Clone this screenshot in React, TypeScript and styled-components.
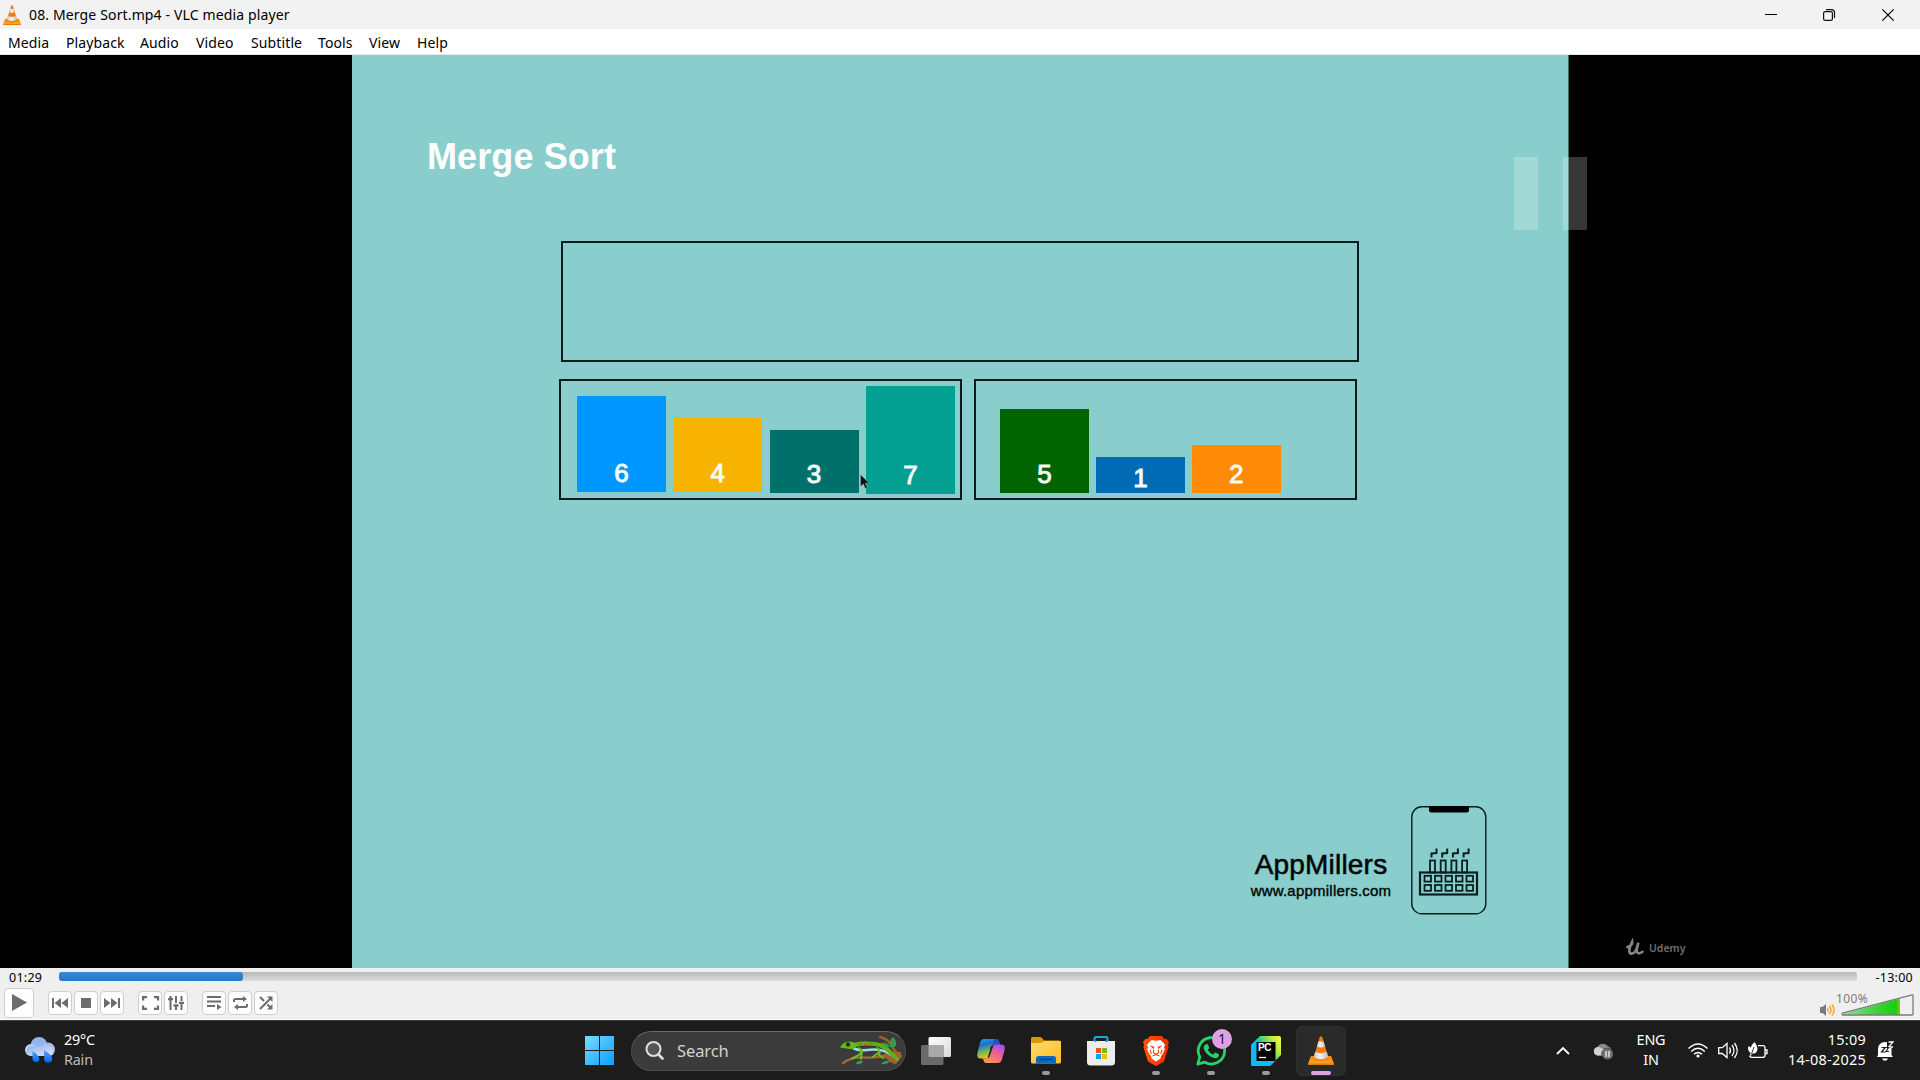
import React from "react";
import styled, { createGlobalStyle } from "styled-components";

const UI = `"Noto Sans", "Open Sans", sans-serif`;
const SLIDE = `"Liberation Sans", Arial, sans-serif`;

const GlobalStyle = createGlobalStyle`
  * { box-sizing: border-box; }
  html, body { margin: 0; padding: 0; background: #000; }
  svg { display: block; flex: none; overflow: visible; }
  button { padding: 0; margin: 0; font: inherit; }
`;

const Desktop = styled.div`
  width: 1920px;
  height: 1080px;
  display: flex;
  flex-direction: column;
  overflow: hidden;
  font-family: ${UI};
  color: #000;
`;

/* ---------- window chrome ---------- */
const TitleBar = styled.header`
  height: 29px;
  flex: none;
  display: flex;
  align-items: center;
  background: #f2f2f2;
  padding: 0 3px;
`;
const Title = styled.span`
  font-size: 14px;
  line-height: 29px;
  margin-left: 8px;
  letter-spacing: 0.14px;
  flex: 1;
`;
const WindowButton = styled.button`
  width: 58.5px;
  height: 28px;
  border: 0;
  background: none;
  display: flex;
  align-items: center;
  justify-content: center;
`;
const MenuBar = styled.nav`
  height: 26px;
  flex: none;
  display: flex;
  background: #fff;
  border-bottom: 1px solid #e6e6e6;
  padding-left: 8px;
`;
const MenuItem = styled.span<{ $w: number }>`
  width: ${(p) => p.$w}px;
  flex: none;
  white-space: nowrap;
  font-size: 14px;
  line-height: 27px;
  letter-spacing: 0.12px;
`;

/* ---------- video ---------- */
const Video = styled.main`
  position: relative;
  height: 913px;
  flex: none;
  background: #000;
  display: flex;
  padding-left: 352px;
`;
const Slide = styled.section`
  width: 1217px;
  height: 913px;
  background: #89cecc;
  border-right: 1px solid #3d6e6c;
  display: flex;
  flex-direction: column;
  padding: 81px 0 0 75px;
  font-family: ${SLIDE};
`;
const SlideTitle = styled.h1`
  margin: 0;
  height: 105px;
  font-size: 36px;
  line-height: 41px;
  font-weight: 700;
  letter-spacing: 0.1px;
  color: #fff;
`;
const ResultBox = styled.div`
  margin-left: 134px;
  width: 798px;
  height: 121px;
  border: 2px solid #0b1a1a;
`;
const Halves = styled.div`
  display: flex;
  gap: 12px;
  margin: 17px 0 0 132px;
`;
const Half = styled.div<{ $w: number; $pad: number; $gap: number }>`
  position: relative;
  width: ${(p) => p.$w}px;
  height: 121px;
  border: 2px solid #0b1a1a;
  padding-left: ${(p) => p.$pad}px;
  display: flex;
  align-items: flex-end;
  gap: ${(p) => p.$gap}px;
`;
const Bar = styled.div<{ $h: number; $c: string; $b: number; $t: number }>`
  width: 89px;
  height: ${(p) => p.$h}px;
  margin-bottom: ${(p) => p.$b}px;
  background: ${(p) => p.$c};
  color: #f4fbf6;
  display: flex;
  align-items: flex-end;
  justify-content: center;
  font-size: 26px;
  line-height: 26px;
  padding-bottom: ${(p) => p.$t}px;
  -webkit-text-stroke: 1px #f4fbf6;
`;
const Pointer = styled.svg`
  position: absolute;
  left: 299px;
  top: 93px;
`;
const Brand = styled.div`
  margin: auto 81px 53px auto;
  display: flex;
  align-items: flex-start;
`;
const BrandText = styled.div`
  width: 142px;
  padding-top: 42px;
  margin-right: 19px;
  text-align: center;
  white-space: nowrap;
`;
const BrandName = styled.div`
  font-size: 28px;
  line-height: 34px;
  letter-spacing: 0.2px;
  -webkit-text-stroke: 0.6px #061313;
`;
const BrandUrl = styled.div`
  font-size: 15px;
  line-height: 18px;
  letter-spacing: 0.22px;
  -webkit-text-stroke: 0.45px #061313;
`;
const PauseOverlay = styled.div`
  position: absolute;
  left: 1514px;
  top: 102px;
  display: flex;
  gap: 25px;
`;
const PauseBar = styled.i`
  width: 24px;
  height: 73px;
  background: rgba(255, 255, 255, 0.21);
`;
const Watermark = styled.div`
  position: absolute;
  left: 1626px;
  top: 885px;
  display: flex;
  align-items: center;
  gap: 5px;
  color: #707070;
  font: 600 10.5px/16px ${UI};
`;

/* ---------- player controls ---------- */
const Controls = styled.footer`
  height: 52px;
  flex: none;
  background: #efefef;
  display: flex;
  flex-direction: column;
`;
const SeekRow = styled.div`
  height: 18px;
  display: flex;
  align-items: center;
  padding: 0 7px 0 9px;
`;
const Time = styled.span<{ $w: number; $right?: boolean }>`
  width: ${(p) => p.$w}px;
  text-align: ${(p) => (p.$right ? "right" : "left")};
  font-size: 12.5px;
  line-height: 18px;
  padding-top: 1px;
  letter-spacing: 0.25px;
`;
const Track = styled.div`
  flex: 1;
  height: 9px;
  margin-top: -1px;
  border-radius: 3px;
  background: linear-gradient(#b9b9b9, #dcdcdc);
`;
const Played = styled.div`
  width: 184px;
  height: 9px;
  border-radius: 3px;
  background: linear-gradient(#388ad6, #2477c8);
`;
const ButtonRow = styled.div`
  flex: 1;
  display: flex;
  align-items: center;
  padding: 0 6px 0 4px;
  border-bottom: 1px solid #fafafa;
`;
const PlayerButton = styled.button<{ $size?: number; $gap?: number }>`
  width: ${(p) => p.$size ?? 24}px;
  height: ${(p) => p.$size ?? 24}px;
  margin-right: ${(p) => p.$gap ?? 2}px;
  background: #fdfdfd;
  border: 1px solid #cfcfcf;
  border-radius: 4px;
  display: flex;
  align-items: center;
  justify-content: center;
`;
const Volume = styled.div`
  position: relative;
  margin-left: auto;
  display: flex;
  align-items: flex-end;
  gap: 6px;
  height: 26px;
`;
const VolumeLabel = styled.span`
  position: absolute;
  left: 16px;
  top: 0;
  font-size: 12px;
  line-height: 18px;
  letter-spacing: 0.4px;
  color: #7c7c7c;
`;

/* ---------- taskbar ---------- */
const Taskbar = styled.div`
  height: 60px;
  flex: none;
  display: flex;
  align-items: center;
  background: #1c1c1c;
  border-top: 1px solid #404040;
  color: #fff;
`;
const Weather = styled.div`
  width: 576px;
  padding-left: 25px;
  display: flex;
  align-items: center;
  gap: 9px;
`;
const Lines = styled.div<{ $align?: string; $w?: number; $ls?: number }>`
  width: ${(p) => (p.$w ? p.$w + "px" : "auto")};
  padding-bottom: 2px;
  text-align: ${(p) => p.$align ?? "left"};
  font-size: 14.4px;
  line-height: 20px;
  letter-spacing: ${(p) => p.$ls ?? -0.2}px;
  white-space: nowrap;
`;
const Muted = styled.div`
  color: #bdbdbd;
`;
const StartButton = styled.div`
  width: 55px;
  padding-left: 9px;
`;
const SearchBox = styled.div`
  width: 275px;
  height: 40px;
  border-radius: 20px;
  background: #3b3b3b;
  border: 1px solid #4d4d4d;
  border-top-color: #686868;
  display: flex;
  align-items: center;
  padding: 0 3px 0 13px;
  color: #d2d2d2;
  font-size: 16.5px;
  letter-spacing: -0.1px;
`;
const SearchText = styled.span`
  flex: 1;
  padding-left: 13px;
  line-height: 38px;
`;
const Apps = styled.div`
  display: flex;
  margin-left: 5px;
  gap: 5px;
`;
const AppTile = styled.div<{ $active?: boolean }>`
  position: relative;
  width: 50px;
  height: 50px;
  border-radius: 6px;
  display: flex;
  align-items: center;
  justify-content: center;
  background: ${(p) => (p.$active ? "#2a2a2a" : "transparent")};
  border: 1px solid ${(p) => (p.$active ? "#313131" : "transparent")};
`;
const Indicator = styled.i<{ $active?: boolean }>`
  position: absolute;
  bottom: 0;
  left: 50%;
  transform: translateX(-50%);
  width: ${(p) => (p.$active ? 20 : 8)}px;
  height: 4px;
  border-radius: 2px;
  background: ${(p) => (p.$active ? "#dfa0e6" : "#9a9a9a")};
`;
const Badge = styled.span`
  position: absolute;
  left: 25px;
  top: 2px;
  width: 20px;
  height: 20px;
  border-radius: 50%;
  background: #dfa0e6;
  color: #1a1a1a;
  font-size: 14px;
  line-height: 20px;
  text-align: center;
`;
const Tray = styled.div`
  margin-left: auto;
  display: flex;
  align-items: center;
  padding-right: 26px;
`;
const TrayCell = styled.div<{ $ml: number }>`
  margin-left: ${(p) => p.$ml}px;
`;

/* ---------- drawings ---------- */
const Cone = ({ w, h }: { w: number; h: number }) => (
  <svg width={w} height={h} viewBox="0 0 26 29" preserveAspectRatio="none">
    <defs>
      <linearGradient id="coneBase" x1="0" y1="0" x2="0" y2="1">
        <stop offset="0" stopColor="#ff8a10" />
        <stop offset="1" stopColor="#ffa71e" />
      </linearGradient>
      <linearGradient id="coneWhite" x1="0" y1="0" x2="1" y2="0">
        <stop offset="0" stopColor="#c9c9c9" />
        <stop offset=".45" stopColor="#f2f2f2" />
        <stop offset="1" stopColor="#bdbdbd" />
      </linearGradient>
    </defs>
    <path d="M3.6 20h18.8q.8 0 1 .8L26 28q.2 1-.9 1H.9Q-.2 29 0 28l2.6-7.2q.3-.8 1-.8z" fill="url(#coneBase)" />
    <path d="M0 27.4h26v1q0 .6-.8.6H.8q-.8 0-.8-.6z" fill="#e07c08" />
    <path d="M11.9.8q1.1-1 2.2 0L20.6 22q-1 2.5-7.6 2.5T5.4 22z" fill="#f57c0a" />
    <path d="M10.5 5.2q2.5 1.3 5 0l1.6 5.2q-4 2-8.2 0z" fill="url(#coneWhite)" />
    <path d="M7.300 15.8q5.600 2.700 11.400 0l1.500 5q-1.400 2.400-7.200 2.400t-7.200-2.400z" fill="url(#coneWhite)" />
  </svg>
);

const Factory = () => (
  <svg width="76" height="109" viewBox="0 0 76 109" fill="none" stroke="#07201f">
    <rect x=".8" y=".8" width="74" height="107" rx="10" strokeWidth="1.4" />
    <path d="M18 0h40v4q0 2.500-2.500 2.500h-35Q18 6.500 18 4z" fill="#000" stroke="none" />
    <rect x="9" y="66.500" width="57" height="22" strokeWidth="2.200" />
    {[0, 1, 2, 3, 4].map((i) => (
      <g key={i} strokeWidth="1.800">
        <rect x={13.5 + i * 10.5} y="69.800" width="6.500" height="5.800" />
        <rect x={13.5 + i * 10.5} y="79" width="6.500" height="5.800" />
      </g>
    ))}
    {[0, 1, 2, 3].map((i) => (
      <g key={i}>
        <rect x={19 + i * 10.7} y="54.500" width="5" height="12" strokeWidth="1.800" />
        <polyline
          points={`${20.5 + i * 10.7},51.5 ${20.5 + i * 10.7},47.500 ${25.5 + i * 10.7},47 ${25.5 + i * 10.7},42.500`}
          strokeWidth="2"
        />
      </g>
    ))}
  </svg>
);

const WeatherIcon = () => (
  <svg width="30" height="27" viewBox="0 0 30 27">
    <defs>
      <linearGradient id="cloud" x1="0" y1="0" x2="1" y2="1">
        <stop offset="0" stopColor="#8fb4ee" />
        <stop offset=".5" stopColor="#b9cdf2" />
        <stop offset="1" stopColor="#dce6fa" />
      </linearGradient>
      <linearGradient id="drop" x1="0" y1="0" x2="0" y2="1">
        <stop offset="0" stopColor="#5aa4ff" />
        <stop offset="1" stopColor="#0064f5" />
      </linearGradient>
    </defs>
    <circle cx="14" cy="8.500" r="8.500" fill="#93b5ec" />
    <circle cx="6" cy="13" r="6" fill="#c3d5f6" />
    <circle cx="23" cy="12.500" r="7" fill="#a5c0ee" />
    <rect x="1.500" y="9" width="27" height="10" rx="5" fill="url(#cloud)" />
    <path d="M7.500 14q6.500 4 7 8.500a3.700 3.700 0 0 1-7 0zM19 13q7.800 4.500 8.300 9a4.300 4.300 0 0 1-8 1.500z" fill="url(#drop)" />
  </svg>
);

const Gecko = () => (
  <svg width="62" height="30" viewBox="0 0 62 30" fill="none" strokeLinecap="round">
    <path d="M3 27q8-6 21-5.500T45 20" stroke="#a86a35" strokeWidth="2.200" />
    <path d="M40 1q8 2 11 8t10 11" stroke="#9a5d2d" strokeWidth="2.600" />
    <path d="M36 20q8-1 12-4 6-1 13 0v6l-5 6q-6-1-8-4t-12-2z" fill="#a0622c" />
    <path d="M50 11q-1-7 3-10 5 5 2 10zM41 7q6-1 9 4-6 1-9-4zM16 27q2-3 7-2-1 4-7 3zM41 28q3-4 9-3-3 4-9 3z" fill="#3a9a4c" />
    <path d="M14 12.500q6 2.500 13 1.500t13 0q8 1 17 9" stroke="#9adfe6" strokeWidth="2.600" />
    <path d="M12 9.500q9-2.500 16-2 9 0 14 2.500 7 4 14 12" stroke="#5fae16" strokeWidth="4.200" />
    <path d="M0 11.500q3-6 9-6t8 4q-2 4-7 3.500z" fill="#66bb14" />
    <path d="M19 12q4 4 0 7l-7 3.500M22 14l-1 9M37 12q4 4 2 7l4 3M38 17l-5 4" stroke="#6fbd22" strokeWidth="2" />
    <circle cx="8" cy="8.500" r="2.200" fill="#213813" />
    <path d="M20 8h1M25 8.500h1M31 8h1" stroke="#d24a20" strokeWidth="1.300" />
  </svg>
);

const Copilot = () => (
  <svg width="28" height="26" viewBox="0 0 28 26">
    <defs>
      <linearGradient id="cpA" x1="0" y1="0" x2=".3" y2="1">
        <stop offset="0" stopColor="#1aa6ee" />
        <stop offset=".35" stopColor="#1f6fd6" />
        <stop offset=".65" stopColor="#69b65a" />
        <stop offset="1" stopColor="#f2c21c" />
      </linearGradient>
      <linearGradient id="cpB" x1=".8" y1="0" x2=".2" y2="1">
        <stop offset="0" stopColor="#a34ff0" />
        <stop offset=".5" stopColor="#f0648c" />
        <stop offset="1" stopColor="#fb9a4a" />
      </linearGradient>
    </defs>
    <path d="M7 1h12q2.500 0 3.500 4l.6 2h-4q-3 0-4 3.500l-2.300 7q-1 3-4.500 3H4Q-.8 20.500.4 15L3 5Q4 1 7 1z" fill="url(#cpA)" />
    <path d="M17 1h2q2.500 0 3.500 4l.6 2h-5q-2.500 0-3.600 3z" fill="#2350c6" />
    <path d="M21 25H9.500Q7 25 6.200 21.500l-.4-1.200h3.500q3 0 4-3.500l2.200-7q1-3.300 4.500-3.300h4Q29 6.500 27.600 12L25 21q-1 4-4 4z" fill="url(#cpB)" />
    <path d="M13.600 8.500l3.300-1q-1 1-1.500 2.500L12.500 18q-.4 1.500-2 2l2.600-8z" fill="#1c1c1c" />
  </svg>
);

const Folder = () => (
  <svg width="30" height="27" viewBox="0 0 30 27">
    <defs>
      <linearGradient id="fld" x1="0" y1="0" x2="1" y2="1">
        <stop offset="0" stopColor="#ffdb6e" />
        <stop offset="1" stopColor="#ffbc22" />
      </linearGradient>
    </defs>
    <path d="M0 1.500Q0 0 1.500 0H9q1 0 2 1l2 2.500h15q2 0 2 1.500v6H0z" fill="#dc9705" />
    <path d="M0 6h10l3.500-2H28.500q1.500 0 1.500 1.500V25q0 1.500-1.500 1.500h-27Q0 26.500 0 25z" fill="url(#fld)" />
    <path d="M5 26.500v-5Q5 19 7.500 19h15q2.500 0 2.500 2.500v5z" fill="#0b6cbd" />
    <path d="M8.500 22.500h13" stroke="#053f77" strokeWidth="1.300" />
  </svg>
);

const Store = () => (
  <svg width="30" height="30" viewBox="0 0 30 30">
    <path d="M8.500 6V2.500Q8.500 1 10 1h10q1.500 0 1.500 1.500V6" fill="none" stroke="#1ba4e8" strokeWidth="2" />
    <path d="M1 5h28v21q0 3.500-3.500 3.500h-21Q1 29.500 1 26z" fill="#ececec" />
    <path d="M8.500 5h2M19.500 5h2" stroke="#1689d0" strokeWidth="2" />
    <path d="M10 12h5v5h-5z" fill="#f25022" />
    <path d="M16 12h5v5h-5z" fill="#7fba00" />
    <path d="M10 18h5v5h-5z" fill="#00a4ef" />
    <path d="M16 18h5v5h-5z" fill="#ffb900" />
  </svg>
);

const Brave = () => (
  <svg width="26" height="30" viewBox="0 0 26 30">
    <defs>
      <linearGradient id="brv" x1="0" x2="1">
        <stop offset="0" stopColor="#ff5a00" />
        <stop offset="1" stopColor="#ff2400" />
      </linearGradient>
    </defs>
    <path d="M7 0h12l2.500 3 2-.3L26 6l-1 3 .5 2-4 13q-.5 1.500-2 2.500L13 30l-6.500-3.500q-1.500-1-2-2.500l-4-13L1 9 0 6l2.500-3.300 2 .3z" fill="url(#brv)" />
    <path d="M8.500 4L13 4.800 17.500 4l4.500 4.500-1 3 .8 2-1.800 4-2 2.500-.5 2.500L13 25.500 8.500 22.500 8 20l-2-2.500-1.800-4 .8-2-1-3z" fill="#fff" />
    <path d="M6.500 9.500l5 1.200-.8 2.300zM19.500 9.500l-5 1.200.8 2.300z" fill="#ff3c00" />
    <path d="M10.800 13.500l-.5 3.200L13 18.300l2.700-1.600-.5-3.200M7 14l1.500 4M19 14l-1.500 4M9.500 20l3.500-1.500 3.500 1.500" fill="none" stroke="#ff4300" strokeWidth="1.100" />
  </svg>
);

const WhatsApp = () => (
  <svg width="30" height="30" viewBox="0 0 30 30">
    <path d="M1.800 28.200l2-7.200a13.200 13.200 0 1 1 5 5.200z" fill="none" stroke="#25d366" strokeWidth="2.800" strokeLinejoin="round" />
    <path d="M10.800 8q.8-.2 1.200.7l1.100 2.700q.2.600-.2 1.100l-1.100 1.400q2 3.500 5.400 4.800l1.400-1.700q.5-.6 1.200-.3l2.600 1.300q.8.400.6 1.200-.6 3-3.800 3-3.800-.2-7.800-4T7.700 11q.6-2.600 3.100-3z" fill="#25d366" />
  </svg>
);

const PyCharmFrame = styled.div`
  position: relative;
  display: flex;
`;
const PyCharmText = styled.span`
  position: absolute;
  left: 7px;
  top: 5px;
  font: 700 10px/13px ${SLIDE};
  letter-spacing: -0.3px;
  color: #fff;
`;
const PyCharm = () => (
  <PyCharmFrame>
    <svg width="30" height="30" viewBox="0 0 30 30">
      <defs>
        <linearGradient id="pyc" x1="0" y1=".7" x2="1" y2=".1">
          <stop offset="0" stopColor="#0abef2" />
          <stop offset=".45" stopColor="#18d19a" />
          <stop offset=".8" stopColor="#c6ec3c" />
          <stop offset="1" stopColor="#fcf84a" />
        </linearGradient>
      </defs>
      <path d="M9 0h19q2 0 2 2v17L19 30H2q-2 0-2-2V9z" fill="url(#pyc)" />
      <path d="M0 9l6-6v22h18l-5 5H2q-2 0-2-2z" fill="#08bdf5" />
      <path d="M5.500 6h19v19h-19z" fill="#000" />
      <path d="M8 21.500h7" stroke="#fff" strokeWidth="1.300" />
    </svg>
    <PyCharmText>PC</PyCharmText>
  </PyCharmFrame>
);

const glyph = "#6c6c6c";
const leftBars = [
  { v: 6, h: 96, c: "#0096ff", b: 6, t: 6 },
  { v: 4, h: 75, c: "#f8b200", b: 6, t: 6 },
  { v: 3, h: 63, c: "#00706b", b: 5, t: 6 },
  { v: 7, h: 108, c: "#039f92", b: 4, t: 6 },
];
const rightBars = [
  { v: 5, h: 84, c: "#006400", b: 5, t: 6 },
  { v: 1, h: 36, c: "#006bb5", b: 5, t: 2 },
  { v: 2, h: 48, c: "#ff8a05", b: 5, t: 6 },
];

export default function App() {
  return (
    <>
      <GlobalStyle />
      <Desktop>
        <TitleBar>
          <Cone w={18} h={20} />
          <Title>08. Merge Sort.mp4 - VLC media player</Title>
          <WindowButton>
            <svg width="12" height="12"><path d="M0 5.500h12" stroke="#000" /></svg>
          </WindowButton>
          <WindowButton>
            <svg width="12" height="12" fill="none" stroke="#111" strokeWidth="1.200">
              <rect x=".6" y="2.600" width="8.800" height="8.800" rx="1.500" />
              <path d="M3 .6h5.500a3 3 0 0 1 3 3V9" />
            </svg>
          </WindowButton>
          <WindowButton>
            <svg width="12" height="12"><path d="M.3.300l11.400 11.400M11.700.300L.3 11.700" stroke="#000" strokeWidth="1.200" /></svg>
          </WindowButton>
        </TitleBar>

        <MenuBar>
          <MenuItem $w={58}>Media</MenuItem>
          <MenuItem $w={74}>Playback</MenuItem>
          <MenuItem $w={56}>Audio</MenuItem>
          <MenuItem $w={55}>Video</MenuItem>
          <MenuItem $w={67}>Subtitle</MenuItem>
          <MenuItem $w={51}>Tools</MenuItem>
          <MenuItem $w={48}>View</MenuItem>
          <MenuItem $w={50}>Help</MenuItem>
        </MenuBar>

        <Video>
          <Slide>
            <SlideTitle>Merge Sort</SlideTitle>
            <ResultBox />
            <Halves>
              <Half $w={403} $pad={16} $gap={7.3}>
                {leftBars.map((b) => (
                  <Bar key={b.v} $h={b.h} $c={b.c} $b={b.b} $t={b.t}>{b.v}</Bar>
                ))}
                <Pointer width="10" height="16" viewBox="0 0 10 16">
                  <path d="M.5.500v12l2.800-2.500 2 4.500 2-1-2-4.200h4z" fill="#111" stroke="#9ab" strokeWidth=".6" />
                </Pointer>
              </Half>
              <Half $w={383} $pad={24} $gap={6.9}>
                {rightBars.map((b) => (
                  <Bar key={b.v} $h={b.h} $c={b.c} $b={b.b} $t={b.t}>{b.v}</Bar>
                ))}
              </Half>
            </Halves>
            <Brand>
              <BrandText>
                <BrandName>AppMillers</BrandName>
                <BrandUrl>www.appmillers.com</BrandUrl>
              </BrandText>
              <Factory />
            </Brand>
          </Slide>
          <PauseOverlay>
            <PauseBar />
            <PauseBar />
          </PauseOverlay>
          <Watermark>
            <svg width="18" height="16" viewBox="0 0 19 16" fill="none" stroke="#858585" strokeWidth="2.800" strokeLinecap="round">
              <path d="M1.500 7Q7 5 6.500 1.500 3.500 7.500 3.500 11q0 3 2.500 3Q10.500 14 13 2.500 10.500 11.500 12 13q2 1.500 5.500-1" />
            </svg>
            Udemy
          </Watermark>
        </Video>

        <Controls>
          <SeekRow>
            <Time $w={50}>01:29</Time>
            <Track><Played /></Track>
            <Time $w={56} $right>-13:00</Time>
          </SeekRow>
          <ButtonRow>
            <PlayerButton $size={30} $gap={14}>
              <svg width="15" height="17"><path d="M0 0l15 8.500L0 17z" fill={glyph} /></svg>
            </PlayerButton>
            <PlayerButton>
              <svg width="16" height="10" fill={glyph}><path d="M0 0h2v10H0zM9 0v10L2.500 5zM16 0v10L9.500 5z" /></svg>
            </PlayerButton>
            <PlayerButton>
              <svg width="10" height="10"><path d="M0 0h10v10H0z" fill={glyph} /></svg>
            </PlayerButton>
            <PlayerButton $gap={14}>
              <svg width="16" height="10" fill={glyph}><path d="M14 0h2v10h-2zM0 0v10l6.500-5zM7 0v10l6.500-5z" /></svg>
            </PlayerButton>
            <PlayerButton>
              <svg width="17" height="14" fill="none" stroke={glyph} strokeWidth="2.200"><path d="M1.100 4.500V1.100h4M12 1.100h4v3.400M16 9.500v3.400h-4M5 12.900H1.100V9.500" /></svg>
            </PlayerButton>
            <PlayerButton $gap={14}>
              <svg width="16" height="14" fill="none" stroke={glyph} strokeWidth="2"><path d="M2.500 0v2M2.500 4v10M8 0v7M8 10v4M13.500 0v5M13.500 8v6" /><path d="M0 3.200h5M5.500 9.500h5M11 6.800h5" strokeWidth="2.300" /></svg>
            </PlayerButton>
            <PlayerButton>
              <svg width="15" height="15" fill="none" stroke={glyph} strokeWidth="2"><path d="M0 2h14M0 6.500h14M0 11h8" /><path d="M10 9l4.500 3-4.500 3z" fill={glyph} stroke="none" /></svg>
            </PlayerButton>
            <PlayerButton>
              <svg width="15" height="14" fill="none" stroke={glyph} strokeWidth="2"><path d="M1 6V4.500Q1 3 2.500 3H11M14 8v1.500q0 1.500-1.500 1.500H4" /><path d="M10 0l4 3-4 3zM5 8l-4 3 4 3z" fill={glyph} stroke="none" /></svg>
            </PlayerButton>
            <PlayerButton>
              <svg width="14" height="14" fill="none" stroke={glyph} strokeWidth="2"><path d="M1 13L12 2M1 1l4 4M8.500 8.500L12 12" /><path d="M8 .500h5.500V6zM8 13.500h5.500V8z" fill={glyph} stroke="none" /></svg>
            </PlayerButton>
            <Volume>
              <svg width="15" height="12" viewBox="0 0 15 12"><path d="M0 3h2.500L6 0v12L2.500 9H0z" fill="#7a7a7a" /><path d="M7.500 4q1.500 2 0 4M9.500 2q3 4 0 8M12 .500q4 5.500 0 11" fill="none" stroke="#fb9d2b" strokeWidth="1.400" /></svg>
              <VolumeLabel>100%</VolumeLabel>
              <svg width="73" height="22" viewBox="0 0 73 22">
                <defs>
                  <linearGradient id="vol" x1="0" x2="1">
                    <stop offset="0" stopColor="#a4d9a4" />
                    <stop offset=".55" stopColor="#43d243" />
                    <stop offset=".93" stopColor="#12d012" />
                    <stop offset="1" stopColor="#91c512" />
                  </linearGradient>
                </defs>
                <path d="M1 20L59 4.500V21H1z" fill="url(#vol)" />
                <path d="M1.500 19.200L71 .9q1-.3 1 .8v18.500q0 .8-.8.8H2q-1.500 0-.5-1.800z" fill="none" stroke="#7b7b7b" strokeWidth="1.300" />
              </svg>
            </Volume>
          </ButtonRow>
        </Controls>

        <Taskbar>
          <Weather>
            <WeatherIcon />
            <Lines><div>29°C</div><Muted>Rain</Muted></Lines>
          </Weather>
          <StartButton>
            <svg width="29" height="29" viewBox="0 0 29 29">
              <defs>
                <linearGradient id="win" x1="0" y1="0" x2="1" y2="1">
                  <stop offset="0" stopColor="#7bdcff" />
                  <stop offset="1" stopColor="#0a9dfb" />
                </linearGradient>
              </defs>
              <path d="M0 0h14v14H0zM15 0h14v14H15zM0 15h14v14H0zM15 15h14v14H15z" fill="url(#win)" />
            </svg>
          </StartButton>
          <SearchBox>
            <svg width="19" height="19" fill="none" stroke="#e0e0e0" strokeWidth="2" strokeLinecap="round"><circle cx="8.500" cy="8" r="7" fill="#555" /><path d="M13.500 13.500l4 4" strokeWidth="2.600" /></svg>
            <SearchText>Search</SearchText>
            <Gecko />
          </SearchBox>
          <Apps>
            <AppTile>
              <svg width="30" height="28">
                <defs>
                  <linearGradient id="tv" x1="0" x2="1" y1="0" y2="1"><stop offset="0" stopColor="#fff" /><stop offset="1" stopColor="#d9d9d9" /></linearGradient>
                </defs>
                <rect x="7.500" y="0" width="22.500" height="20" rx="1.500" fill="url(#tv)" />
                <path d="M1.500 8H21.500q1 0 1 1v17.500q0 1.500-1.500 1.500H1.500Q0 28 0 26.500v-17Q0 8 1.500 8z" fill="#6a6a6a" />
                <path d="M7.500 8H21.500q1 0 1 1v11H9q-1.500 0-1.500-1.500z" fill="#a9a9a9" />
              </svg>
            </AppTile>
            <AppTile><Copilot /></AppTile>
            <AppTile><Folder /><Indicator /></AppTile>
            <AppTile><Store /></AppTile>
            <AppTile><Brave /><Indicator /></AppTile>
            <AppTile><WhatsApp /><Badge>1</Badge><Indicator /></AppTile>
            <AppTile><PyCharm /><Indicator /></AppTile>
            <AppTile $active><Cone w={26} h={29} /><Indicator $active /></AppTile>
          </Apps>
          <Tray>
            <svg width="14" height="8"><path d="M1 7l6-6 6 6" fill="none" stroke="#fff" strokeWidth="1.800" /></svg>
            <TrayCell $ml={23}>
              <svg width="20" height="18" viewBox="0 0 20 18">
                <path d="M5 13.500a4.500 4.500 0 0 1-.5-8.500A6.200 6.200 0 0 1 15 4.500q3 .5 3.500 3.500l-7 5.500z" fill="#8a8a8a" />
                <path d="M4.500 13.500a4.300 4.300 0 0 1 0-8.500q2-.3 4 1.300L13 9l-3 4.500z" fill="#d0d0d0" />
                <circle cx="14.500" cy="12" r="5.800" fill="#737373" stroke="#1c1c1c" strokeWidth=".6" />
                <path d="M13 9v6M16 9v6" stroke="#fff" strokeWidth="1.200" />
              </svg>
            </TrayCell>
            <TrayCell $ml={23}><Lines $align="center" $w={30} $ls={-0.2}><div>ENG</div><div>IN</div></Lines></TrayCell>
            <TrayCell $ml={22}>
              <svg width="20" height="15" viewBox="0 0 20 15" fill="none" stroke="#fff" strokeWidth="1.400">
                <path d="M.5 5.500Q10-3.500 19.500 5.500M3.200 8.500Q10 2 16.800 8.500M6 11.300Q10 7.500 14 11.300" />
                <circle cx="10" cy="13" r="1.600" fill="#fff" stroke="none" />
              </svg>
            </TrayCell>
            <TrayCell $ml={10}>
              <svg width="20" height="17" viewBox="0 0 20 17" fill="none" stroke="#fff" strokeWidth="1.300">
                <path d="M.7 5.700h3.500L9 1.500v14l-4.800-4H.7zM11.500 5.500q2 3 0 6M14 3q4 5.500 0 11M16.500 1q5.500 7.500 0 15" />
              </svg>
            </TrayCell>
            <TrayCell $ml={10}>
              <svg width="20" height="17" viewBox="0 0 20 17" fill="none" stroke="#fff" strokeWidth="1.300">
                <path d="M10 3.700h5q2 0 2 2v7.600q0 2-2 2H4q-2 0-2.500-1.500M17.500 8h1.500v3.500h-1.500" />
                <path d="M6.500 0q4.500 6 2 10-1.500 2-4 1.500l-2.500 3 .5-3.500Q-1 8 .5 4l2 1.500Q4 2 6.500 0z" fill="#fff" stroke="none" />
                <path d="M6 5L3.500 12" stroke="#1c1c1c" strokeWidth=".9" />
              </svg>
            </TrayCell>
            <TrayCell $ml={18}><Lines $align="right" $w={80} $ls={0.28}><div>15:09</div><div>14-08-2025</div></Lines></TrayCell>
            <TrayCell $ml={11}>
              <svg width="17" height="20" viewBox="0 0 17 20">
                <path d="M1 14V7.500Q1.500 1.500 8 1q5 0 6.500 5v8l1.500 2H0zM5 17.500h6q-.8 2.200-3 2.200t-3-2.200z" fill="#fff" />
                <path d="M10 0h7v7h-7z" fill="#1c1c1c" />
                <path d="M11.500 1H16l-4.500 5H16" fill="none" stroke="#fff" strokeWidth="1.300" />
                <path d="M4.500 6.500h3.700L4.500 11h4M9 6.500h2.500L9 10.500h3" fill="none" stroke="#1c1c1c" strokeWidth="1.200" />
              </svg>
            </TrayCell>
          </Tray>
        </Taskbar>
      </Desktop>
    </>
  );
}
